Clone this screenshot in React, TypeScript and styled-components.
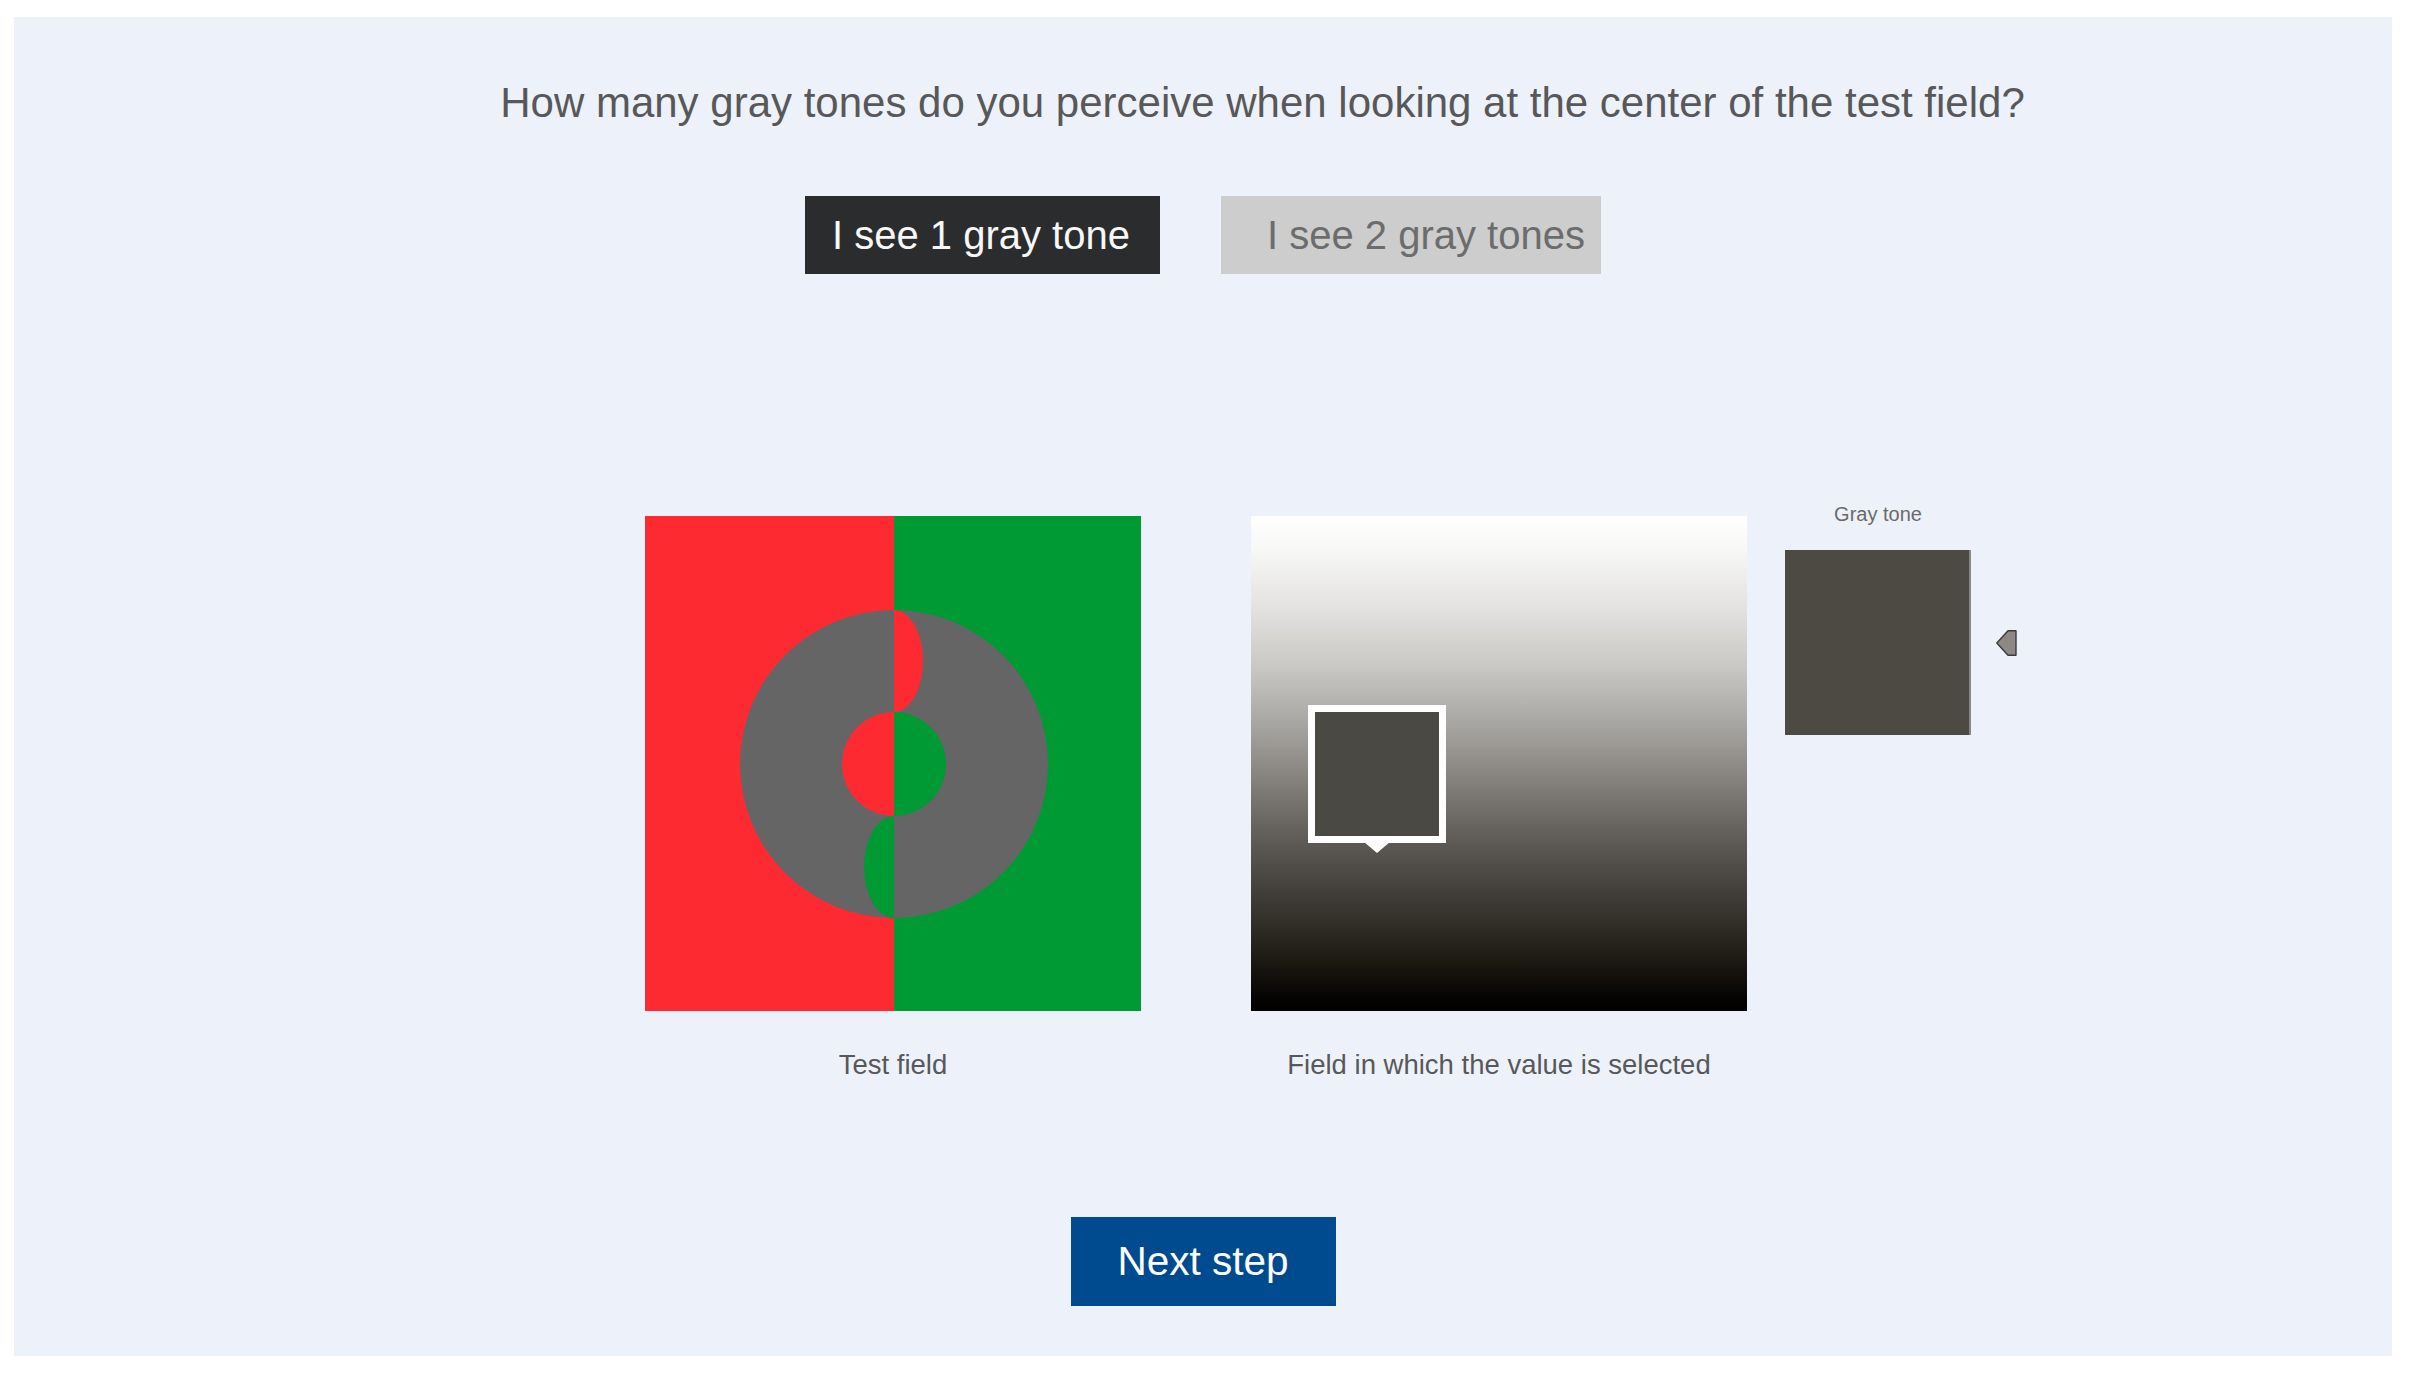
import React from "react";
import styled, { createGlobalStyle } from "styled-components";

const GlobalStyle = createGlobalStyle`
  html, body {
    margin: 0;
    padding: 0;
    background: #ffffff;
  }
  body {
    font-family: "Liberation Sans", Arial, sans-serif;
  }
`;

const Page = styled.div`
  width: 2409px;
  height: 1373px;
  box-sizing: border-box;
  padding: 17px 17px 17px 14px;
`;

const Panel = styled.main`
  width: 2378px;
  height: 1339px;
  box-sizing: border-box;
  background: #edf2fa;
  display: flex;
  flex-direction: column;
  align-items: center;
  padding-top: 62px;
`;

const Question = styled.h1`
  align-self: stretch;
  margin: 0;
  padding-left: 119px;
  text-align: center;
  font-size: 42px;
  line-height: 48px;
  font-weight: 400;
  color: #58585a;
`;

const ButtonRow = styled.div`
  display: flex;
  gap: 61px;
  margin-top: 69px;
`;

const ChoiceButton = styled.button<{ $dark?: boolean; $width: number; $padLeft: number }>`
  width: ${(p) => p.$width}px;
  height: 78px;
  box-sizing: border-box;
  border: 0;
  margin: 0;
  padding: 0 0 0 ${(p) => p.$padLeft}px;
  display: flex;
  align-items: center;
  white-space: nowrap;
  font-family: "Liberation Sans", Arial, sans-serif;
  font-size: 40px;
  line-height: 1;
  background: ${(p) => (p.$dark ? "#2b2c2d" : "#cdcdcd")};
  color: ${(p) => (p.$dark ? "#f7f7f7" : "#6c6c6c")};
  cursor: pointer;
`;

const Stage = styled.section`
  align-self: flex-start;
  margin-left: 631px;
  margin-top: 228px;
  display: flex;
  align-items: flex-start;
`;

const FieldPair = styled.div`
  display: flex;
  gap: 110px;
`;

const FieldColumn = styled.figure`
  margin: 0;
  padding-top: 14px;
  width: 496px;
  display: flex;
  flex-direction: column;
  align-items: center;
`;

const TestFieldBox = styled.div`
  width: 496px;
  height: 495px;
  display: block;
  svg {
    display: block;
  }
`;

const GradientField = styled.div`
  position: relative;
  width: 496px;
  height: 495px;
  background: linear-gradient(
    to bottom,
    #ffffff 0%,
    #f7f7f6 7%,
    #e4e3e1 18%,
    #cbc9c6 30%,
    #aba9a5 41%,
    #8c8985 51%,
    #6c6964 61%,
    #4f4b46 71%,
    #35312b 81%,
    #1c1812 90%,
    #070503 97%,
    #000000 100%
  );
`;

const Marker = styled.div`
  position: absolute;
  left: 57px;
  top: 189px;
  width: 138px;
  height: 138px;
  box-sizing: border-box;
  border: 7px solid #ffffff;
  background: #4b4944;

  &::after {
    content: "";
    position: absolute;
    left: 50%;
    top: 100%;
    width: 0;
    height: 0;
    transform: translateX(-50%);
    border-left: 20px solid transparent;
    border-right: 20px solid transparent;
    border-top: 17px solid #ffffff;
  }
`;

const Caption = styled.figcaption`
  margin-top: 38px;
  font-size: 27.5px;
  line-height: 32px;
  color: #58585a;
`;

const SwatchColumn = styled.div`
  margin-left: 38px;
  width: 186px;
  display: flex;
  flex-direction: column;
  align-items: center;
`;

const SwatchLabel = styled.div`
  font-size: 20px;
  line-height: 24px;
  color: #6a6a6a;
`;

const Swatch = styled.div`
  margin-top: 24px;
  width: 186px;
  height: 185px;
  box-sizing: border-box;
  background: #4d4a44;
  border-right: 2px solid #8a8886;
`;

const ArrowHandle = styled.div`
  margin-left: 25px;
  margin-top: 128px;
  width: 21px;
  height: 26px;
  svg {
    display: block;
  }
`;

const NextButton = styled.button`
  margin-top: 136px;
  width: 265px;
  height: 89px;
  border: 0;
  padding: 0;
  background: #004a8f;
  color: #ffffff;
  font-family: "Liberation Sans", Arial, sans-serif;
  font-size: 40.5px;
  cursor: pointer;
`;

const RED = "#fe2a31";
const GREEN = "#009a34";
const GRAY = "#656565";

function TestFieldGraphic() {
  return (
    <svg width="496" height="495" viewBox="0 0 496 495">
      <rect x="0" y="0" width="249" height="495" fill={RED} />
      <rect x="249" y="0" width="247" height="495" fill={GREEN} />
      <circle cx="249" cy="248" r="154" fill={GRAY} />
      <path d="M249,196 A52,52 0 0 0 249,300 Z" fill={RED} />
      <path d="M249,196 A52,52 0 0 1 249,300 Z" fill={GREEN} />
      <path d="M249,94 A29,51 0 0 1 249,196 Z" fill={RED} />
      <path d="M249,300 A30,51 0 0 0 249,402 Z" fill={GREEN} />
    </svg>
  );
}

function HandleIcon() {
  return (
    <svg width="21" height="26" viewBox="0 0 21 26">
      <polygon
        points="0.8,13 12,0.8 20,0.8 20,25.2 12,25.2"
        fill="#8d8884"
        stroke="#3c3b3a"
        strokeWidth="1.4"
        strokeLinejoin="round"
      />
    </svg>
  );
}

export default function App() {
  return (
    <>
      <GlobalStyle />
      <Page>
        <Panel>
          <Question>How many gray tones do you perceive when looking at the center of the test field?</Question>
          <ButtonRow>
            <ChoiceButton $dark $width={355} $padLeft={27}>
              I see 1 gray tone
            </ChoiceButton>
            <ChoiceButton $width={380} $padLeft={46}>
              I see 2 gray tones
            </ChoiceButton>
          </ButtonRow>
          <Stage>
            <FieldPair>
              <FieldColumn>
                <TestFieldBox>
                  <TestFieldGraphic />
                </TestFieldBox>
                <Caption>Test field</Caption>
              </FieldColumn>
              <FieldColumn>
                <GradientField>
                  <Marker />
                </GradientField>
                <Caption>Field in which the value is selected</Caption>
              </FieldColumn>
            </FieldPair>
            <SwatchColumn>
              <SwatchLabel>Gray tone</SwatchLabel>
              <Swatch />
            </SwatchColumn>
            <ArrowHandle>
              <HandleIcon />
            </ArrowHandle>
          </Stage>
          <NextButton>Next step</NextButton>
        </Panel>
      </Page>
    </>
  );
}
